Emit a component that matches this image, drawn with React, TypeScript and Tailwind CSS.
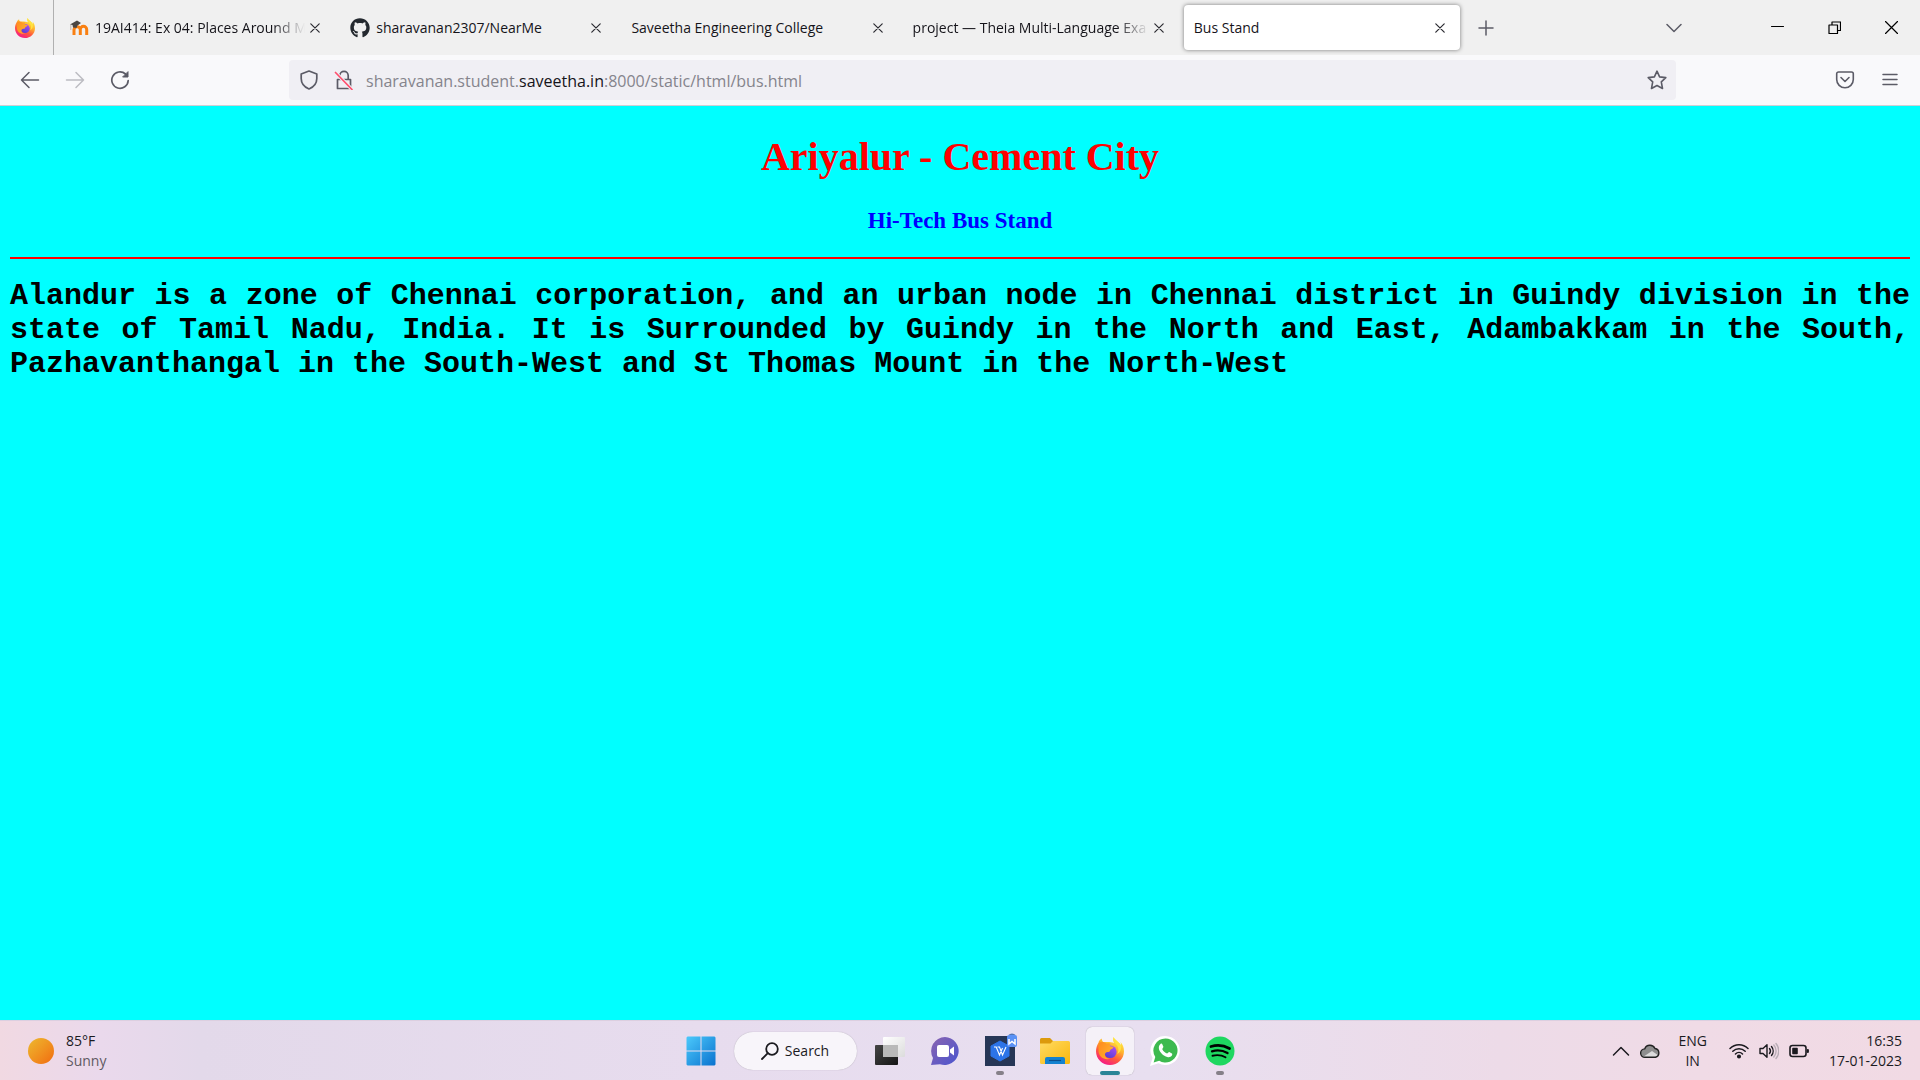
import type { ReactNode } from "react";
import { FaGithub } from "react-icons/fa";

function Svg({ s = 20, box = 20, sw = 1.5, cls = "", children }: { s?: number; box?: number; sw?: number; cls?: string; children: ReactNode }) {
  return (
    <svg width={s} height={s} viewBox={`0 0 ${box} ${box}`} fill="none" stroke="currentColor" strokeWidth={sw} strokeLinecap="round" strokeLinejoin="round" className={`shrink-0 ${cls}`} aria-hidden="true">
      {children}
    </svg>
  );
}

function Firefox({ s, id }: { s: number; id: string }) {
  return (
    <svg width={s} height={s} viewBox="0 0 28 28" className="shrink-0" aria-hidden="true">
      <defs>
        <linearGradient id={`${id}a`} x1="0.8" y1="0.05" x2="0.3" y2="1">
          <stop offset="0" stopColor="#fff04a" />
          <stop offset="0.35" stopColor="#ffb52e" />
          <stop offset="0.65" stopColor="#ff5a3c" />
          <stop offset="1" stopColor="#f5168a" />
        </linearGradient>
        <linearGradient id={`${id}b`} x1="0.8" y1="0" x2="0.2" y2="1">
          <stop offset="0" stopColor="#b14bf5" />
          <stop offset="1" stopColor="#4d3fd0" />
        </linearGradient>
        <linearGradient id={`${id}c`} x1="0" y1="0" x2="1" y2="0.6">
          <stop offset="0" stopColor="#ff8a1e" />
          <stop offset="1" stopColor="#ffb12c" />
        </linearGradient>
      </defs>
      <path d="M17.5 0c-.6 2.400-.6 4.200.8 6C14 4.500 10 5 7.500 5.300 6.300 4.300 5.700 3 5.800 1.600 3.600 2.800 2.800 4.200 2.500 6 .8 8.300 0 11.500 0 14.300 0 22 6.300 28 14 28s14-6 14-13.800c0-4.200-1.600-7.300-3.500-9.200.4 1.300.6 2.500.5 3.600C23.500 4.800 19 3.600 17.500 0z" fill={`url(#${id}a)`} />
      <circle cx="14.300" cy="14.800" r="6.300" fill={`url(#${id}b)`} />
      <path d="M2.500 6c3-1.600 6.300-1.200 8.300.7 1.400-.6 3-.4 4 .2-1.300.6-1.500 1.400-1.200 1.900.7.800 3.600.8 3.900 1.300-.2 1.500-2.300 2.100-3 2.700-.6.700 0 2-1.900 2.100-1.700 0-2.800.3-3.300 1.400-1.600 3 1.700 5.900 5.200 5.400-6 1.700-11.700-1.600-12-8z" fill={`url(#${id}c)`} />
      <path d="M17.500 0c-.6 3 .4 5.300 2.600 7.300 2.700 2.500 3 6.700 1.100 9.700 3-1.600 4.600-4.800 3.800-8.400C23.500 4.800 19 3.600 17.500 0z" fill="#ffe23f" />
    </svg>
  );
}

function Moodle() {
  return (
    <svg width="20" height="20" viewBox="0 0 20 20" className="shrink-0" aria-hidden="true">
      <path d="M5 17V11.500a3.200 3.200 0 0 1 6.300 0V17M11.300 17V11.500a3.200 3.200 0 0 1 6.400 0V17" fill="none" stroke="#f98012" strokeWidth="3" />
      <path d="M1 6.500 8 2.500 12 5 8.500 7.500 7.500 10 4 9.500 3.500 7z" fill="#4a4642" />
      <path d="M1.800 6.500V12" stroke="#b8aba0" strokeWidth="0.800" />
    </svg>
  );
}

function Close() {
  return (
    <button aria-label="Close tab" className="flex size-5 shrink-0 items-center justify-center text-[#2a2a30]">
      <Svg s={10} box={10} sw={1.2}><path d="M.8.8l8.400 8.400M9.200.8L.8 9.200" /></Svg>
    </button>
  );
}

function Tab({ icon, title, fade, active }: { icon?: ReactNode; title: string; fade?: boolean; active?: boolean }) {
  return (
    <div className={`flex h-[45px] min-w-0 flex-1 items-center rounded pl-2.5 pr-2.5 ${active ? "bg-white shadow-[0_0_4px_rgba(0,0,0,0.5)]" : ""}`}>
      {icon && <span className="mr-1.5 flex">{icon}</span>}
      <span role="tab" aria-selected={!!active} className={`min-w-0 flex-1 overflow-hidden whitespace-nowrap text-sm text-[#15141a] ${fade ? "[mask-image:linear-gradient(to_left,transparent,black_32px)]" : ""}`}>
        {title}
      </span>
      <Close />
    </div>
  );
}

function TaskButton({ label, dot, active, children }: { label: string; dot?: boolean; active?: boolean; children: ReactNode }) {
  return (
    <button aria-label={label} className={`relative flex size-12 items-center justify-center rounded-md ${active ? "bg-[#f5f1f8] shadow-[0_0_1px_rgba(0,0,0,0.35)]" : ""}`}>
      {children}
      {dot && <span className="absolute bottom-0 left-5 h-1 w-2 rounded-full bg-[#858088]" />}
      {active && <span className="absolute bottom-0 left-3.5 h-1 w-5 rounded-full bg-[#2a8497]" />}
    </button>
  );
}

export default function App() {
  return (
    <div className="flex h-screen min-h-[600px] flex-col bg-[#00ffff] font-['Open_Sans',sans-serif]">
      <header>
        <div className="flex h-[55px] items-center bg-[#f0f0f0]">
          <button aria-label="Firefox View" className="flex h-full w-[54px] shrink-0 items-center border-r border-[#b0b0b0] pl-[15px]">
            <Firefox s={20} id="t" />
          </button>
          <div role="tablist" className="flex min-w-0 flex-[1_1_1406px] items-center gap-[5px] pl-[5px]">
            <Tab icon={<Moodle />} title="19AI414: Ex 04: Places Around M" fade />
            <Tab icon={<FaGithub size={20} color="#24292f" />} title="sharavanan2307/NearMe" />
            <Tab title="Saveetha Engineering College" />
            <Tab title="project — Theia Multi-Language Exa" fade />
            <Tab title="Bus Stand" active />
          </div>
          <div className="flex min-w-0 flex-[0_0_460px] items-center text-[#5b5b66]">
            <button aria-label="New tab" className="ml-[18px]"><Svg s={16} box={16}><path d="M8 1v14M1 8h14" /></Svg></button>
            <button aria-label="List all tabs" className="ml-auto mr-[89px]"><Svg s={16} box={16}><path d="M1 4.500l7 7 7-7" /></Svg></button>
            <div className="flex items-center gap-11 pr-[22px] text-black">
              <button aria-label="Minimize"><Svg s={13} box={13} sw={1.1}><path d="M.5 5.500h12" /></Svg></button>
              <button aria-label="Restore"><Svg s={13} box={13} sw={1.2}><path d="M1 4h8.500v8.500H1zM4 4V1h8.500v8.500h-3" /></Svg></button>
              <button aria-label="Close"><Svg s={13} box={13} sw={1.2}><path d="M.5.5l12 12M12.500.5l-12 12" /></Svg></button>
            </div>
          </div>
        </div>
        <div className="flex h-[51px] items-center border-b border-[#cfcfd4] bg-[#f9f9fb] text-[#5b5b66]">
          <div className="flex w-[289px] shrink-0 items-center gap-[25px] pl-5">
            <button aria-label="Back"><Svg><path d="M18.500 10H1.500M9 2.500L1.500 10 9 17.500" /></Svg></button>
            <button aria-label="Forward" className="text-[#bcbcc2]"><Svg><path d="M1.500 10h17M11 2.500l7.500 7.500-7.500 7.500" /></Svg></button>
            <button aria-label="Reload"><Svg sw={1.700}><path d="M18.200 10.500A8.200 8.200 0 1 1 15.500 4" /><path d="M18 2v5h-5z" fill="currentColor" strokeWidth="1" /></Svg></button>
          </div>
          <div className="flex h-10 min-w-0 flex-1 items-center rounded bg-[#f0eff4] pl-2.5 pr-[9px]">
            <Svg sw={1.700}><path d="M10 1l7.800 3v4.500c0 4.500-3 8.500-7.800 10.500C5.200 17 2.200 13 2.200 8.500V4z" /></Svg>
            <Svg cls="ml-[15px]" sw={1.700}>
              <path d="M3.500 9.500h13v9h-13zM5.800 9V5.500a4.200 4.200 0 0 1 8.400 0V9" />
              <path d="M1.500 2.500l16.500 17" stroke="#f0f0f4" strokeWidth="3.500" />
              <path d="M1.500 2.500l16.500 17" stroke="#ff4f6e" strokeWidth="1.700" />
            </Svg>
            <div className="ml-3 min-w-0 flex-1 overflow-hidden whitespace-nowrap pt-0.5 text-base text-[#85848c]">
              sharavanan.student.<span className="text-[#15141a]">saveetha.in</span>:8000/static/html/bus.html
            </div>
            <button aria-label="Bookmark this page"><Svg sw={1.600}><path d="M10 1.200l2.600 5.700 6.200.7-4.500 4.200 1.200 6.700L10 15.500l-5.500 3 1.200-6.700L1.200 7.600l6.200-.7z" /></Svg></button>
          </div>
          <div className="flex w-[244px] shrink-0 items-center justify-end gap-[27px] pr-[22px]">
            <button aria-label="Save to Pocket"><Svg sw={1.600}><path d="M3.500 2h13a1.800 1.800 0 0 1 1.800 1.800V9.500a8.300 8.300 0 0 1-16.600 0V3.800A1.800 1.800 0 0 1 3.500 2zM6 7.500l4 4 4-4" /></Svg></button>
            <button aria-label="Open menu"><Svg s={16} box={16}><path d="M1 2.500h14M1 7.500h14M1 12.500h14" /></Svg></button>
          </div>
        </div>
      </header>

      <main className="flex-1 px-2.5 pt-7 text-center">
        <h1 className="font-['Liberation_Serif',serif] text-[40px] font-bold leading-[46px] text-[#ff0000]">Ariyalur - Cement City</h1>
        <h3 className="mt-7 font-['Liberation_Serif',serif] text-[23px] font-bold leading-[26px] text-[#0000ff]">Hi-Tech Bus Stand</h3>
        <hr className="mt-[23px] border-t-2 border-[#ff0000]" />
        <p className="mt-5 text-justify font-['Liberation_Mono',monospace] text-[30px] font-bold leading-[34px] text-black">
          Alandur is a zone of Chennai corporation, and an urban node in Chennai district in Guindy division in the state of Tamil Nadu, India. It is Surrounded by Guindy in the North and East, Adambakkam in the South, Pazhavanthangal in the South-West and St Thomas Mount in the North-West
        </p>
      </main>

      <footer className="grid h-[60px] shrink-0 grid-cols-[1fr_auto_1fr] items-center border-t border-[#dccfe0] bg-[linear-gradient(90deg,#f1d9e2_0px,#ead9ec_100px,#e3d9ea_200px,#e7dcee_700px,#e8dff0_1150px,#eddbe8_1500px,#f0dbe6_1700px,#f1dae4_1920px)] text-sm text-[#1b1a1f]">
        <div className="flex items-center gap-3 pl-7">
          <span className="size-[26px] rounded-full bg-linear-to-br from-[#ecb92f] to-[#f06a0e]" />
          <div>
            <div>85°F</div>
            <div className="text-[#5f5a62]">Sunny</div>
          </div>
        </div>
        <nav aria-label="Taskbar" className="flex items-center gap-[7px]">
          <TaskButton label="Start">
            <svg width="30" height="30" viewBox="0 0 30 30" aria-hidden="true">
              <defs><linearGradient id="w" x1="0" y1="0" x2="1" y2="1"><stop offset="0" stopColor="#4cc9fb" /><stop offset="1" stopColor="#0a72cf" /></linearGradient></defs>
              <path d="M1.500.5H14.500V14.500H.5V1.500zM15.500.5H28.500l1 1V14.500H15.500zM.5 15.500H14.500V29.500H1.500l-1-1zM15.500 15.500H29.500V28.500l-1 1H15.500z" fill="url(#w)" />
            </svg>
          </TaskButton>
          <button className="mx-[2px] flex h-[38px] w-[123px] items-center justify-center gap-1.5 rounded-full bg-[#f8f5fa] shadow-[0_0_1px_rgba(0,0,0,0.3)]">
            <Svg s={18} box={18} sw={1.800}><circle cx="11" cy="7" r="5.800" /><path d="M6.800 11.200L1 17" /></Svg>
            Search
          </button>
          <TaskButton label="Task view">
            <svg width="30" height="30" viewBox="0 0 30 30" aria-hidden="true">
              <defs>
                <linearGradient id="v1" x1="0" y1="0" x2="1" y2="1"><stop offset="0" stopColor="#454545" /><stop offset="1" stopColor="#151515" /></linearGradient>
                <linearGradient id="v2" x1="0" y1="0" x2="1" y2="1"><stop offset="0" stopColor="#fff" /><stop offset="1" stopColor="#dcdcdc" /></linearGradient>
              </defs>
              <rect x="0" y="9" width="23" height="20" rx="1" fill="url(#v1)" />
              <rect x="8" y="1" width="22" height="20" rx="1" fill="url(#v2)" />
              <rect x="8" y="9" width="15" height="12" fill="#b9b9b9" />
            </svg>
          </TaskButton>
          <TaskButton label="Chat">
            <svg width="30" height="30" viewBox="0 0 30 30" aria-hidden="true">
              <defs><linearGradient id="m" x1="0" y1="0" x2="1" y2="1"><stop offset="0" stopColor="#8a64b0" /><stop offset="1" stopColor="#4a55cf" /></linearGradient></defs>
              <path d="M15 1a14 14 0 1 1-5 27.200L1 29l2-7A14 14 0 0 1 15 1z" fill="url(#m)" />
              <rect x="7" y="9" width="12" height="12" rx="2" fill="#fff" />
              <path d="M20 13.500l4-3v9l-4-3z" fill="#fff" />
            </svg>
          </TaskButton>
          <TaskButton label="WPS Office" dot>
            <svg width="34" height="34" viewBox="0 0 34 34" className="overflow-visible" aria-hidden="true">
              <rect x="2" y="2" width="30" height="30" fill="#263656" />
              <path d="M17 7l9 5v10l-9 5-9-5V12z" fill="#2c74e8" stroke="#2c74e8" strokeLinejoin="round" />
              <path d="M11 13h2.200l3.300 8L19.500 14M14.500 13h2l3 8 3.500-8" fill="none" stroke="#fff" strokeWidth="1.100" />
              <rect x="24" y="1" width="10" height="12" rx="2" fill="#5a91f5" />
              <path d="M25.500 1a4 3 0 0 1 7 0" fill="#4f76b8" />
              <path d="M26 5v5l3-2.500L32 10V5" fill="none" stroke="#fff" strokeWidth="1.500" />
            </svg>
          </TaskButton>
          <TaskButton label="File Explorer">
            <svg width="30" height="30" viewBox="0 0 30 30" aria-hidden="true">
              <defs><linearGradient id="f" x1="0" y1="0" x2="1" y2="1"><stop offset="0" stopColor="#ffdb63" /><stop offset="1" stopColor="#fab70c" /></linearGradient></defs>
              <path d="M0 3.500A1.500 1.500 0 0 1 1.500 2H10l3 3v5H0z" fill="#dc9a0c" />
              <path d="M0 7.500h10.500L13 5h15.500A1.500 1.500 0 0 1 30 6.500v20a1.500 1.500 0 0 1-1.500 1.500h-27A1.500 1.500 0 0 1 0 26.500z" fill="url(#f)" />
              <path d="M5 28v-5a2 2 0 0 1 2-2h16a2 2 0 0 1 2 2v5z" fill="#1482d0" />
              <path d="M9 24.500h12" stroke="#0b4f8c" strokeWidth="1.200" />
            </svg>
          </TaskButton>
          <TaskButton label="Firefox" active><Firefox s={28} id="b" /></TaskButton>
          <TaskButton label="WhatsApp">
            <svg width="30" height="30" viewBox="0 0 30 30" aria-hidden="true">
              <path d="M15.500 0a14.500 14.500 0 1 1-7 27.300L0 30l2.600-8A14.500 14.500 0 0 1 15.500 0z" fill="#fff" />
              <path d="M15.500 2.500a12 12 0 1 1-6.300 22.200L3.600 26.400l1.700-5.500A12 12 0 0 1 15.500 2.500z" fill="#3dba4f" />
              <path d="M10.500 8c.6-.6 1.500-.5 1.800.2l1.100 2.600c.2.600-1.300 2-1.100 2.400 1 2 2.600 3.500 4.700 4.400.5.200 1.700-1.800 2.300-1.500l2.600 1.300c.5.300.4 1.300 0 2.100-1 1.600-3 2-4.600 1.500-4-1.200-7.300-4.300-8.300-7.700C8.500 11.200 9 9.300 10.500 8z" fill="#fff" />
            </svg>
          </TaskButton>
          <TaskButton label="Spotify" dot>
            <svg width="30" height="30" viewBox="0 0 30 30" fill="none" stroke="#000" strokeLinecap="round" aria-hidden="true">
              <circle cx="15" cy="15" r="14.500" fill="#1ed760" stroke="none" />
              <path d="M6 10.500c6-1.700 13-1.100 18.500 2" strokeWidth="2.800" />
              <path d="M7 15.300c5-1.400 11-.8 15.500 1.800" strokeWidth="2.300" />
              <path d="M7.500 19.700c4.500-1 9.300-.6 13 1.600" strokeWidth="1.900" />
            </svg>
          </TaskButton>
        </nav>
        <div className="flex items-center justify-end pr-[18px]">
          <button aria-label="Show hidden icons"><Svg s={18} box={18}><path d="M1.500 13L9 5.500l7.500 7.500" /></Svg></button>
          <svg width="20" height="20" viewBox="0 0 20 20" className="ml-2.5" aria-hidden="true">
            <path d="M5 16.300a4.200 4.200 0 0 1-.3-8.400A5.600 5.600 0 0 1 15 7.500a4.500 4.500 0 0 1 .5 8.800z" fill="#8e8e8e" />
            <path d="M3 16l9-6 6.500 4.500-3 1.800H5z" fill="#dcdcdc" />
            <path d="M5 16.300a4.200 4.200 0 0 1-.3-8.400A5.600 5.600 0 0 1 15 7.500a4.500 4.500 0 0 1 .5 8.800z" fill="none" stroke="#222" strokeWidth="1.400" />
          </svg>
          <button className="ml-[18px] text-center">ENG<br />IN</button>
          <button aria-label="Network, sound and battery" className="ml-[22px] flex items-center gap-2.5">
            <Svg sw={1.500}><path d="M1 7.500a12.700 12.700 0 0 1 18 0M3.800 10.300a8.800 8.800 0 0 1 12.400 0M6.500 13a5 5 0 0 1 7 0" /><circle cx="10" cy="15.500" r="1.300" fill="currentColor" /></Svg>
            <Svg sw={1.400}><path d="M1 7.500h3l4-3.800v12.600L4 12.500H1zM10.500 7.500a4 4 0 0 1 0 5" /><path d="M12.500 5.500a7 7 0 0 1 0 9" /><path d="M14.800 4a9 9 0 0 1 0 12M17 2.500a11.500 11.500 0 0 1 0 15" stroke="#b9adb6" /></Svg>
            <Svg sw={1.600}><rect x="1" y="4.500" width="16" height="11" rx="2.500" /><path d="M4 7.500h4v5H4z" fill="currentColor" /><path d="M18.800 9v2" strokeWidth="2.200" /></Svg>
          </button>
          <button className="ml-5 text-right">16:35<br />17-01-2023</button>
        </div>
      </footer>
    </div>
  );
}
